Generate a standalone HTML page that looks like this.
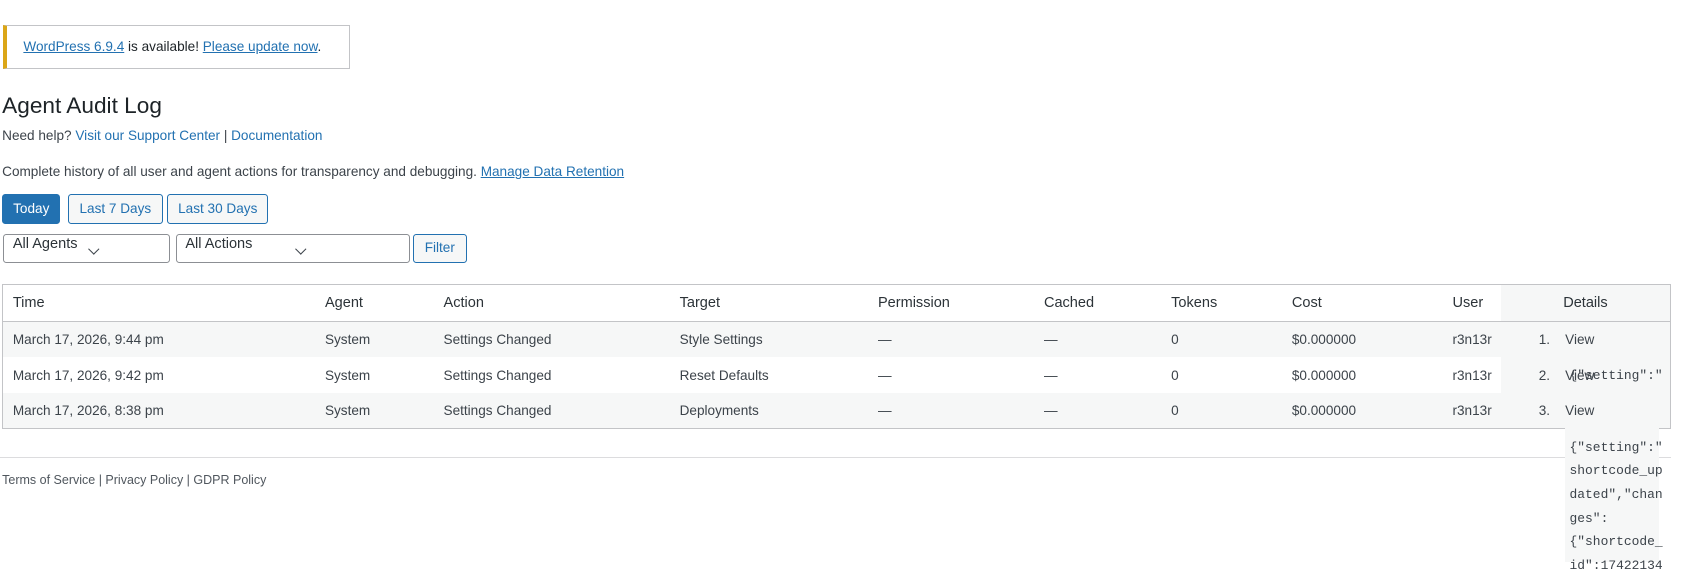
<!DOCTYPE html>
<html><head><meta charset="utf-8"><style>
*{box-sizing:border-box;margin:0;padding:0}
body{width:1690px;height:561px;background:#fff;overflow:hidden}
#w{zoom:1.078;width:1568px;height:521px;position:relative;font-family:"Liberation Sans",Arial,sans-serif;color:#3c434a;font-size:12.6px}
a{color:#2271b1;text-decoration:none}
.abs{position:absolute}
.notice{left:3px;top:23px;width:322px;height:41px;border:1px solid #c3c4c7;border-left:4px solid #dba617;background:#fff;font-size:12.6px;padding:12px 0 0 15px;color:#1d2327}
.notice a{text-decoration:underline}
h1{position:absolute;left:2px;top:86px;font-size:21px;font-weight:400;color:#1d2327}
.btn{position:absolute;top:180px;height:28px;border:1px solid #2271b1;border-radius:3px;background:#f6f7f7;color:#2271b1;font-size:12.6px;line-height:26px;text-align:center}
.sel{position:absolute;top:217px;height:27px;border:1px solid #8c8f94;border-radius:3px;background:#fff;color:#2c3338;font-size:13.5px;padding:0 0 0 8px;line-height:18px}
.chev{position:absolute;top:9px;width:7px;height:7px;border-right:1.5px solid #3c434a;border-bottom:1.5px solid #3c434a;transform:rotate(45deg)}
table{position:absolute;left:2px;top:263px;width:1548px;border-collapse:collapse;border:1px solid #c3c4c7;font-size:12.6px;color:#3c434a}
th{font-weight:400;font-size:13.5px;color:#2c3338;height:35px;text-align:left;border-bottom:1px solid #c3c4c7;padding-left:9px}
td{height:33px;padding-left:9px;position:relative;z-index:2}
tr.s td{background:#f6f7f7}
tr.w td{background:#fff}
.det{background:#f6f7f7 !important;text-align:left}
.pre{position:absolute;left:1452px;width:87px;background:#f6f7f7;font-family:"Liberation Mono","DejaVu Sans Mono",monospace;font-size:12px;line-height:22px;color:#3c434a;padding-left:4px}
</style></head><body><div id="w">
<div class="abs notice"><a href="#">WordPress 6.9.4</a> is available! <a href="#">Please update now</a>.</div>
<h1>Agent Audit Log</h1>
<div class="abs" style="left:2px;top:119px">Need help? <a href="#">Visit our Support Center</a> | <a href="#">Documentation</a></div>
<div class="abs" style="left:2px;top:152px">Complete history of all user and agent actions for transparency and debugging. <a href="#" style="text-decoration:underline">Manage Data Retention</a></div>
<div class="btn" style="left:2px;width:54px;background:#2271b1;color:#fff">Today</div>
<div class="btn" style="left:63px;width:88px">Last 7 Days</div>
<div class="btn" style="left:155px;width:94px">Last 30 Days</div>
<div class="sel" style="left:3px;width:155px">All Agents<span class="chev" style="left:80px"></span></div>
<div class="sel" style="left:163px;width:217px">All Actions<span class="chev" style="left:112px"></span></div>
<div class="btn" style="left:383px;top:217px;width:50px;height:27px;line-height:25px">Filter</div>
<div class="pre" style="top:338px;height:62px;z-index:3;background:transparent">{"setting":"</div>
<table>
<tr><th style="width:290px">Time</th><th style="width:110px">Agent</th><th style="width:219px">Action</th><th style="width:184px">Target</th><th style="width:154px">Permission</th><th style="width:118px">Cached</th><th style="width:112px">Tokens</th><th style="width:149px">Cost</th><th style="width:54px">User</th><th class="det" style="text-align:center;padding:0">Details</th></tr>
<tr class="s"><td>March 17, 2026, 9:44 pm</td><td>System</td><td>Settings Changed</td><td>Style Settings</td><td>—</td><td>—</td><td>0</td><td>$0.000000</td><td>r3n13r</td><td class="det" style="padding-left:35px">1.&nbsp;&nbsp;&nbsp;&nbsp;View</td></tr>
<tr class="w"><td>March 17, 2026, 9:42 pm</td><td>System</td><td>Settings Changed</td><td>Reset Defaults</td><td>—</td><td>—</td><td>0</td><td>$0.000000</td><td>r3n13r</td><td class="det" style="padding-left:35px">2.&nbsp;&nbsp;&nbsp;&nbsp;View</td></tr>
<tr class="s"><td>March 17, 2026, 8:38 pm</td><td>System</td><td>Settings Changed</td><td>Deployments</td><td>—</td><td>—</td><td>0</td><td>$0.000000</td><td>r3n13r</td><td class="det" style="padding-left:35px">3.&nbsp;&nbsp;&nbsp;&nbsp;View</td></tr>
</table>
<div class="abs" style="left:0;top:424px;width:1550px;border-top:1px solid #dcdcde"></div>
<div class="pre" style="top:382px;height:139px;z-index:1">&nbsp;. . . ".<br>{"setting":"<br>shortcode_up<br>dated","chan<br>ges":<br>{"shortcode_<br>id":17422134</div>
<div class="abs" style="left:2px;top:439px;font-size:11.6px;color:#50575e">Terms of Service | Privacy Policy | GDPR Policy</div>
</div></body></html>
